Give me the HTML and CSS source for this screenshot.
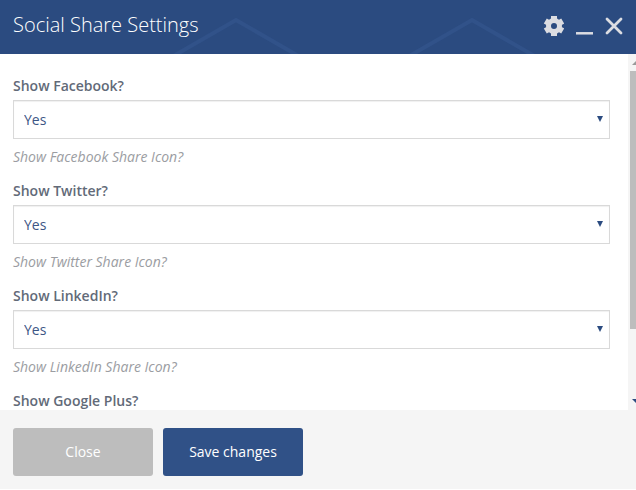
FILE: index.html
```html
<!DOCTYPE html>
<html lang="en">
<head>
  <meta charset="UTF-8">
  <title>Social Share Settings</title>
  <link rel="stylesheet" href="styles.css">
</head>
<body>

<div class="panel">
  <header class="panel-header">
    <svg class="header-pattern" aria-hidden="true">
      <path d="M170 58 L236 20 L302 58 M406 58 L472 20 L538 58" fill="none" stroke="#315289" stroke-width="4"/>
    </svg>
    <h1>Social Share Settings</h1>
    <div class="header-tools">
      <button type="button" aria-label="Options">
        <svg width="22" height="22" viewBox="0 0 22 22">
          <g fill="none" stroke="#dcdde2">
            <circle cx="12" cy="11" r="5.5" stroke-width="5"/>
            <path d="M12 1v4M12 17v4M3.3 6l3.5 2M17.200 14l3.500 2M3.300 16l3.500-2M17.200 8l3.500-2" stroke-width="6"/>
          </g>
        </svg>
      </button>
      <button type="button" aria-label="Minimize">
        <svg width="17" height="22" viewBox="0 0 17 22">
          <path d="M0 18.300h17" fill="none" stroke="#dcdde2" stroke-width="2.500"/>
        </svg>
      </button>
      <button type="button" aria-label="Close panel">
        <svg width="18" height="22" viewBox="0 0 18 22">
          <path d="M2 4l14 14M16 4L2 18" fill="none" stroke="#dcdde2" stroke-width="2.800" stroke-linecap="round"/>
        </svg>
      </button>
    </div>
  </header>

  <div class="panel-body">
    <form class="fields" id="shareForm">
      <div class="field">
        <label for="facebook">Show Facebook?</label>
        <div class="select-box">
          <select id="facebook"><option>Yes</option><option>No</option></select>
        </div>
        <p class="help">Show Facebook Share Icon?</p>
      </div>
      <div class="field">
        <label for="twitter">Show Twitter?</label>
        <div class="select-box">
          <select id="twitter"><option>Yes</option><option>No</option></select>
        </div>
        <p class="help">Show Twitter Share Icon?</p>
      </div>
      <div class="field">
        <label for="linkedin">Show LinkedIn?</label>
        <div class="select-box">
          <select id="linkedin"><option>Yes</option><option>No</option></select>
        </div>
        <p class="help">Show LinkedIn Share Icon?</p>
      </div>
      <div class="field">
        <label for="google">Show Google Plus?</label>
        <div class="select-box">
          <select id="google"><option>Yes</option><option>No</option></select>
        </div>
      </div>
    </form>
    <div class="scrollbar" aria-hidden="true">
      <span class="arrow arrow-up"></span>
      <div class="track"><div class="thumb"></div></div>
      <span class="arrow arrow-down"></span>
    </div>
  </div>

  <footer class="panel-footer">
    <button type="button" class="btn btn-close">Close</button>
    <button type="submit" form="shareForm" class="btn btn-save">Save changes</button>
  </footer>
</div>

</body>
</html>
```

FILE: styles.css
```css
* {
  box-sizing: border-box;
}
body {
  margin: 0;
  font-family: "Open Sans", sans-serif;
  font-size: 14px;
  line-height: 20px;
  background: #fff;
}
.panel {
  display: flex;
  flex-direction: column;
  height: 100vh;
  padding-bottom: 1px;
}

/* Header */
.panel-header {
  position: relative;
  display: flex;
  flex: none;
  align-items: center;
  justify-content: space-between;
  height: 54px;
  padding: 0 13px 2px;
  background: #2b4b80;
  overflow: hidden;
}
.header-pattern {
  position: absolute;
  top: 0;
  left: 0;
  width: 100%;
  height: 100%;
}
h1 {
  position: relative;
  margin: 0;
  padding-bottom: 2px;
  font-size: 20px;
  font-weight: 300;
  line-height: 28px;
  color: #fff;
}
.header-tools {
  position: relative;
  display: flex;
  gap: 12px;
}
.header-tools button {
  padding: 0;
  border: none;
  background: none;
  cursor: pointer;
}
.header-tools svg {
  display: block;
}

/* Fields */
.panel-body {
  display: flex;
  flex: 1;
  min-height: 0;
}
.fields {
  flex: 1;
  padding: 22px 18px 0 13px;
  overflow: hidden;
}
.field {
  margin-bottom: 14px;
}
label {
  display: block;
  margin-bottom: 4px;
  font-weight: 600;
  color: #626a78;
}
.select-box {
  position: relative;
}
.select-box::after {
  content: "";
  position: absolute;
  top: 16px;
  right: 7px;
  width: 6px;
  height: 6px;
  background: #2b4b80;
  clip-path: polygon(0 0, 100% 0, 50% 100%);
  pointer-events: none;
}
select {
  display: block;
  width: 100%;
  height: 39px;
  padding: 0 10px;
  border: 1px solid #d9d9d9;
  border-radius: 0;
  box-shadow: inset 0 1px 1px #f0f0f0;
  appearance: none;
  background: #fff;
  font: inherit;
  color: #3d5685;
}
.help {
  margin: 8px 0 0;
  font-style: italic;
  color: #9b9da2;
}

/* Scrollbar */
.scrollbar {
  display: flex;
  flex-direction: column;
  width: 8px;
  padding-left: 2px;
  background: #f5f5f5;
  overflow: hidden;
}
.arrow {
  flex: none;
  width: 8px;
  height: 4px;
  margin-left: 2px;
}
.arrow-up {
  margin-top: 7px;
  margin-bottom: 6px;
  background: #9a9a9a;
  clip-path: polygon(50% 0, 100% 100%, 0 100%);
}
.arrow-down {
  margin-top: 6px;
  margin-bottom: 7px;
  background: #2b4b80;
  clip-path: polygon(0 0, 100% 0, 50% 100%);
}
.track {
  flex: 1;
}
.thumb {
  height: 80%;
  background: #bdbdbd;
}

/* Footer */
.panel-footer {
  display: flex;
  flex: none;
  gap: 10px;
  padding: 18px 13px 13px;
  background: #f5f5f5;
}
.btn {
  width: 140px;
  height: 48px;
  padding: 0;
  border: none;
  border-radius: 3px;
  font: inherit;
  font-weight: 500;
  color: #fff;
  cursor: pointer;
}
.btn-close {
  background: #bdbdbd;
}
.btn-save {
  background: #305187;
}
```
